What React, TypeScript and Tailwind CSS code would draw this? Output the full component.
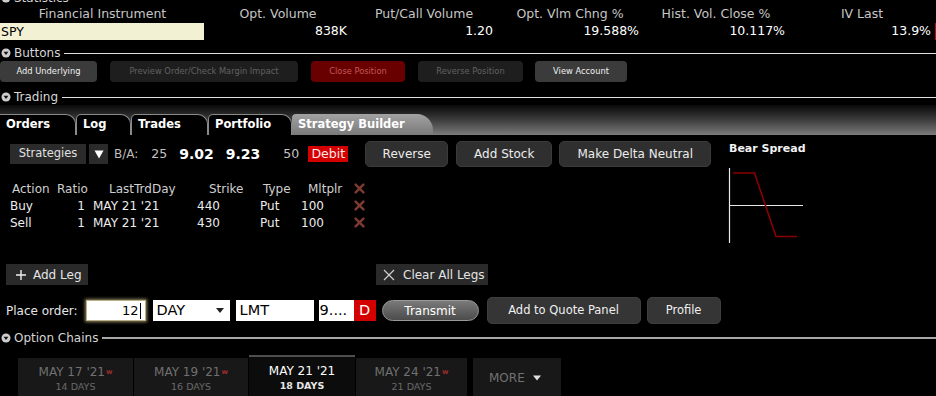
import React from "react";

const Tri = () => (
  <svg width="10" height="10" viewBox="0 0 10 10" className="shrink-0">
    <circle cx="5" cy="5" r="4.5" fill="#cdcdcd" />
    <path d="M2.6 3.7 H7.4 L5 7 Z" fill="#111" />
  </svg>
);

function Section({ label, lineCls, cls }: { label: string; lineCls: string; cls: string }) {
  return (
    <div className={`flex items-center h-[16px] ${cls}`}>
      <div className="ml-[1px] flex items-center">
        <Tri />
      </div>
      <span className="ml-[3px] text-[12px] leading-none text-[#d6d6d6] whitespace-nowrap">{label}</span>
      <div className={`ml-[4px] flex-1 ${lineCls}`} />
    </div>
  );
}

const XMark = () => (
  <svg width="11" height="11" viewBox="0 0 11 11">
    <path d="M1.6 1.6 L9.4 9.4 M9.4 1.6 L1.6 9.4" stroke="#7e3a33" strokeWidth="2.4" strokeLinecap="round" />
  </svg>
);

function StatHead({ t }: { t: string }) {
  return <div className="text-center text-[12.5px] text-[#c6c6c6] whitespace-nowrap">{t}</div>;
}
function StatVal({ t }: { t: string }) {
  return <div className="text-right pr-[4px] text-[12.5px] text-white whitespace-nowrap">{t}</div>;
}

function TopBtn({ w, label, cls }: { w: string; label: string; cls: string }) {
  return (
    <div className={`${w} h-[21px] rounded-[4px] flex items-center justify-center text-[8.3px] whitespace-nowrap ${cls}`}>
      {label}
    </div>
  );
}

function Tab({ label, w, cls }: { label: string; w: string; cls?: string }) {
  return (
    <div
      className={`${w} h-[21px] flex items-center pl-[6px] text-[11.5px] font-bold text-white whitespace-nowrap bg-black border-t border-r border-[#8a8a8a] rounded-tr-[10px] rounded-tl-[5px] ${cls ?? ""}`}
    >
      {label}
    </div>
  );
}

function GrayBtn({ w, label }: { w: string; label: string }) {
  return (
    <div
      className={`${w} h-[26px] rounded-[5px] bg-[#2f2f2f] border border-[#3a3a3a] flex items-center justify-center text-[12px] text-[#ececec] whitespace-nowrap`}
    >
      {label}
    </div>
  );
}

function DateTab({ w, date, days, active }: { w: string; date: string; days: string; active?: boolean }) {
  if (active) {
    return (
      <div className={`${w} h-[42px] bg-[#0c0c0c] border-t-2 border-[#4e4e4e] flex flex-col items-center pt-[7px]`}>
        <div className="text-[12px] leading-[14px] text-white whitespace-nowrap">{date}</div>
        <div className="text-[9.5px] leading-[12px] mt-[2px] text-[#e6e6e6] font-bold whitespace-nowrap">{days}</div>
      </div>
    );
  }
  return (
    <div className={`${w} h-[39px] bg-[#181818] flex flex-col items-center pt-[7px]`}>
      <div className="text-[12px] leading-[14px] text-[#707070] whitespace-nowrap">
        {date}
        <span className="text-[7px] align-top text-[#9a2d2d] font-bold ml-[1px]">w</span>
      </div>
      <div className="text-[9.5px] leading-[12px] mt-[2px] text-[#6a6a6a] whitespace-nowrap">{days}</div>
    </div>
  );
}

export default function App() {
  return (
    <div className="w-[936px] h-[396px] bg-black overflow-hidden font-['DejaVu_Sans',Verdana,sans-serif] select-none">
      {/* Statistics header (cut off at the top, as in the source) */}
      <Section label="Statistics" lineCls="h-px bg-[#dcdcdc]" cls="-mt-[10px]" />

      {/* statistics table */}
      <div className="grid grid-cols-[205px_146px_146px_146px_146px_146px_1px] -mt-[1px] h-[16px] items-center">
        <StatHead t="Financial Instrument" />
        <StatHead t="Opt. Volume" />
        <StatHead t="Put/Call Volume" />
        <StatHead t="Opt. Vlm Chng %" />
        <StatHead t="Hist. Vol. Close %" />
        <StatHead t="IV Last" />
        <div />
      </div>
      <div className="grid grid-cols-[205px_146px_146px_146px_146px_146px_1px] mt-[1px] h-[17px] items-center">
        <div className="h-[17px] w-[204px] bg-[#f3f1d4] text-[12.5px] text-black leading-[17px] pl-[1px]">SPY</div>
        <StatVal t="838K" />
        <StatVal t="1.20" />
        <StatVal t="19.588%" />
        <StatVal t="10.117%" />
        <StatVal t="13.9%" />
        <div className="h-[17px] bg-[#b01010]" />
      </div>

      {/* Buttons */}
      <Section label="Buttons" lineCls="h-px bg-[#e0e0e0]" cls="mt-[6px]" />
      <div className="flex h-[21px]">
        <TopBtn w="w-[97px]" label="Add Underlying" cls="bg-[#3b3b3b] text-[#f0f0f0]" />
        <TopBtn w="w-[188px] ml-[13px]" label="Preview Order/Check Margin Impact" cls="bg-[#1e1e1e] text-[#626262]" />
        <TopBtn w="w-[94px] ml-[13px]" label="Close Position" cls="bg-[#680000] text-[#c25a5a]" />
        <TopBtn w="w-[105px] ml-[13px]" label="Reverse Position" cls="bg-[#1e1e1e] text-[#626262]" />
        <TopBtn w="w-[92px] ml-[12px]" label="View Account" cls="bg-[#3b3b3b] text-[#f0f0f0]" />
      </div>

      {/* Trading */}
      <Section label="Trading" lineCls="h-px bg-[#e0e0e0]" cls="mt-[7px]" />
      <div className="h-[30px] bg-linear-to-b from-[#0a0a0a] via-[#3e3e3e] to-[#7c7c7c] flex items-end">
        <Tab label="Orders" w="w-[76px]" cls="rounded-tl-none" />
        <Tab label="Log" w="w-[55px]" cls="border-l" />
        <Tab label="Trades" w="w-[77px]" cls="border-l" />
        <Tab label="Portfolio" w="w-[84px]" cls="border-l" />
        <div className="w-[141px] h-[21px] flex items-center pl-[6px] text-[11.5px] font-bold text-white whitespace-nowrap bg-linear-to-b from-[#a2a2a2] to-[#7a7a7a] rounded-tr-[16px] rounded-tl-[4px]">
          Strategy Builder
        </div>
      </div>

      {/* Strategy builder body */}
      <div className="flex">
        <div className="w-[729px]">
          <div className="flex items-center h-[26px] mt-[6px] pl-[10px]">
            <div className="w-[76px] h-[20px] bg-[#2b2b2b] flex items-center justify-center text-[11.5px] text-[#e0e0e0]">
              Strategies
            </div>
            <div className="w-[19px] h-[20px] ml-[3px] bg-[#2b2b2b] flex items-center justify-center">
              <svg width="10" height="9" viewBox="0 0 10 9">
                <path d="M0.5 0.5 H9.5 L5 8.5 Z" fill="#fff" />
              </svg>
            </div>
            <span className="ml-[6px] text-[12px] text-[#bdbdbd]">B/A:</span>
            <span className="ml-[13px] text-[12.5px] text-[#c4c4c4]">25</span>
            <span className="ml-[12px] text-[14px] font-bold text-white">9.02</span>
            <span className="ml-[12px] text-[14px] font-bold text-white">9.23</span>
            <span className="ml-[23px] text-[12.5px] text-[#c4c4c4]">50</span>
            <div className="ml-[9px] w-[40px] h-[16px] bg-[#d40000] flex items-center justify-center text-[12.5px] text-[#ffe8e8]">
              Debit
            </div>
            <div className="ml-[17px]">
              <GrayBtn w="w-[83px]" label="Reverse" />
            </div>
            <div className="ml-[8px]">
              <GrayBtn w="w-[96px]" label="Add Stock" />
            </div>
            <div className="ml-[7px]">
              <GrayBtn w="w-[152px]" label="Make Delta Neutral" />
            </div>
          </div>

          {/* legs table */}
          <div className="mt-[13px] text-[12px]">
            <div className="flex h-[17px] items-center text-[#cfcfcf]">
              <span className="w-[57px] pl-[12px]">Action</span>
              <span className="w-[33px]">Ratio</span>
              <span className="w-[107px] pl-[19px]">LastTrdDay</span>
              <span className="w-[58px] pl-[12px]">Strike</span>
              <span className="w-[45px] pl-[8px]">Type</span>
              <span className="w-[50px] pl-[8px]">Mltplr</span>
              <span className="pl-[4px] flex items-center"><XMark /></span>
            </div>
            {[
              ["Buy", "440"],
              ["Sell", "430"],
            ].map(([a, s]) => (
              <div key={a} className="flex h-[17px] items-center text-[#ececec]">
                <span className="w-[57px] pl-[10px]">{a}</span>
                <span className="w-[28px] text-right">1</span>
                <span className="w-[112px] pl-[8px]">MAY 21 '21</span>
                <span className="w-[58px]">{s}</span>
                <span className="w-[45px] pl-[5px]">Put</span>
                <span className="w-[50px] pl-[1px]">100</span>
                <span className="pl-[4px] flex items-center"><XMark /></span>
              </div>
            ))}
          </div>
        </div>

        <div className="flex flex-col">
          <div className="mt-[7px] h-[14px] leading-[14px] text-[11px] font-bold text-[#f2f2f2] whitespace-nowrap">
            Bear Spread
          </div>
          <svg width="76" height="76" viewBox="0 0 76 76" className="mt-[12px] -ml-[1px]">
            <line x1="1.5" y1="0" x2="1.5" y2="75" stroke="#e8e8e8" strokeWidth="1.2" />
            <line x1="1.5" y1="37.5" x2="75" y2="37.5" stroke="#e8e8e8" strokeWidth="1.2" />
            <polyline points="5,5 26.5,5 48,68.5 69,68.5" fill="none" stroke="#8a0000" strokeWidth="1.6" />
          </svg>
        </div>
      </div>

      {/* add / clear legs */}
      <div className="flex mt-[20px] h-[21px]">
        <div className="ml-[6px] w-[82px] h-[21px] bg-[#2a2a2a] flex items-center text-[12px] text-[#e4e4e4]">
          <svg width="12" height="12" viewBox="0 0 12 12" className="ml-[9px]">
            <path d="M6 1 V11 M1 6 H11" stroke="#eee" strokeWidth="1.4" />
          </svg>
          <span className="ml-[6px]">Add Leg</span>
        </div>
        <div className="ml-[288px] w-[112px] h-[21px] bg-[#2a2a2a] flex items-center text-[12px] text-[#e4e4e4]">
          <svg width="12" height="12" viewBox="0 0 12 12" className="ml-[7px]">
            <path d="M1 1 L11 11 M11 1 L1 11" stroke="#cfcfcf" strokeWidth="1.2" />
          </svg>
          <span className="ml-[8px] whitespace-nowrap">Clear All Legs</span>
        </div>
      </div>

      {/* place order */}
      <div className="flex items-center mt-[12px] h-[27px]">
        <span className="ml-[6px] text-[12px] text-[#e6e6e6] whitespace-nowrap">Place order:</span>
        <div className="ml-[8px] w-[60px] h-[21px] bg-white border border-[#b9b08a] shadow-[0_0_3px_1px_#8f8660] flex items-center justify-end pr-[4px]">
          <span className="text-[13px] text-black leading-none">12</span>
          <span className="w-px h-[16px] bg-black ml-[1px]" />
        </div>
        <div className="ml-[7px] w-[77px] h-[21px] bg-white flex items-center pl-[4px] pr-[6px] justify-between">
          <span className="text-[14.5px] text-black leading-none">DAY</span>
          <svg width="8" height="5" viewBox="0 0 8 5">
            <path d="M0 0 H8 L4 5 Z" fill="#222" />
          </svg>
        </div>
        <div className="ml-[6px] w-[78px] h-[21px] bg-white flex items-center pl-[4px]">
          <span className="text-[14.5px] text-black leading-none">LMT</span>
        </div>
        <div className="ml-[5px] w-[35px] h-[21px] bg-white flex items-center pl-[1px]">
          <span className="text-[14.5px] text-black leading-none">9....</span>
        </div>
        <div className="w-[22px] h-[21px] bg-[#d40000] flex items-center justify-center text-[14.5px] text-white leading-none">
          D
        </div>
        <div className="ml-[6px] w-[97px] h-[21px] rounded-full border border-[#9a9a9a] bg-linear-to-b from-[#7a7a7a] to-[#4c4c4c] flex items-center justify-center text-[12px] text-white">
          Transmit
        </div>
        <div className="ml-[8px]">
          <div className="w-[154px] h-[27px] rounded-[5px] bg-[#353535] border border-[#3e3e3e] flex items-center justify-center text-[11.5px] text-[#f0f0f0] whitespace-nowrap">
            Add to Quote Panel
          </div>
        </div>
        <div className="ml-[6px]">
          <div className="w-[74px] h-[27px] rounded-[5px] bg-[#353535] border border-[#3e3e3e] flex items-center justify-center text-[11.5px] text-[#f0f0f0]">
            Profile
          </div>
        </div>
      </div>

      {/* Option chains */}
      <Section label="Option Chains" lineCls="h-[1.5px] bg-[#a8a8a8]" cls="mt-[6px]" />
      <div className="flex items-end mt-[9px] ml-[18px] h-[42px] gap-px">
        <DateTab w="w-[115px]" date="MAY 17 '21" days="14 DAYS" />
        <DateTab w="w-[114px]" date="MAY 19 '21" days="16 DAYS" />
        <DateTab w="w-[106px]" date="MAY 21 '21" days="18 DAYS" active />
        <DateTab w="w-[111px]" date="MAY 24 '21" days="21 DAYS" />
        <div className="ml-[5px] w-[88px] h-[39px] bg-[#181818] flex items-center pl-[16px] text-[12px] text-[#727272]">
          MORE
          <svg width="8" height="6" viewBox="0 0 8 6" className="ml-[8px]">
            <path d="M0 0.5 H8 L4 5.5 Z" fill="#e0e0e0" />
          </svg>
        </div>
      </div>
    </div>
  );
}
